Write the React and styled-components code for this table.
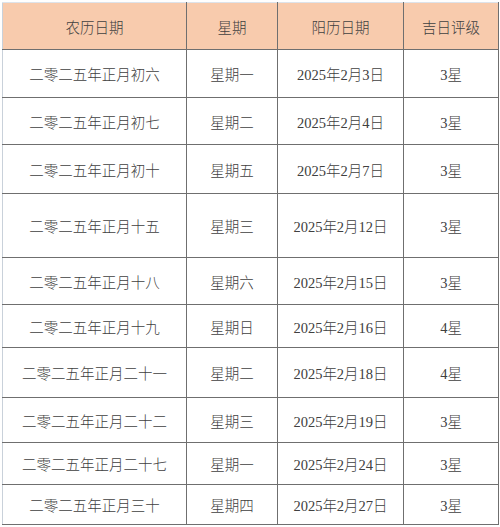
import React from 'react'
import styled, { createGlobalStyle } from 'styled-components'

const GlobalStyle = createGlobalStyle`
    html, body {
        margin: 0;
        padding: 0;
        background: #ffffff;
    }
`

const Page = styled.div`
    padding: 2px 0 0 2px;
    width: 500px;
    box-sizing: border-box;
`

const Table = styled.table`
    width: 496px;
    table-layout: fixed;
    border-collapse: collapse;
    font-family: "Liberation Serif", "Noto Sans CJK SC", serif;
    font-size: 14.5px;
    font-weight: 300;
    color: #404040;
`

const HeadCell = styled.th`
    font-weight: 300;
    background: #f8cbad;
    border: 1px solid #6f6f6f;
    border-top-color: #dde3ea;
    padding: 0;
    text-align: center;
    vertical-align: middle;
    &:first-child {
        border-left-color: #c9d1da;
    }
`

const Cell = styled.td`
    border: 1px solid #6f6f6f;
    padding: 0;
    text-align: center;
    vertical-align: middle;
    &:first-child {
        border-left-color: #c9d1da;
    }
`

const Row = styled.tr`
    height: ${props => props.h}px;
`

const rows = [
    ['二零二五年正月初六', '星期一', '2025年2月3日', '3星', 48],
    ['二零二五年正月初七', '星期二', '2025年2月4日', '3星', 47],
    ['二零二五年正月初十', '星期五', '2025年2月7日', '3星', 49],
    ['二零二五年正月十五', '星期三', '2025年2月12日', '3星', 64],
    ['二零二五年正月十八', '星期六', '2025年2月15日', '3星', 47],
    ['二零二五年正月十九', '星期日', '2025年2月16日', '4星', 43],
    ['二零二五年正月二十一', '星期二', '2025年2月18日', '4星', 50],
    ['二零二五年正月二十二', '星期三', '2025年2月19日', '3星', 45],
    ['二零二五年正月二十七', '星期一', '2025年2月24日', '3星', 42],
    ['二零二五年正月三十', '星期四', '2025年2月27日', '3星', 40],
]

export default function App() {
    return (
        <Page>
            <GlobalStyle />
            <Table>
                <colgroup>
                    <col style={{ width: 184 }} />
                    <col style={{ width: 91 }} />
                    <col style={{ width: 126 }} />
                    <col style={{ width: 95 }} />
                </colgroup>
                <thead>
                    <Row h={47}>
                        <HeadCell>农历日期</HeadCell>
                        <HeadCell>星期</HeadCell>
                        <HeadCell>阳历日期</HeadCell>
                        <HeadCell>吉日评级</HeadCell>
                    </Row>
                </thead>
                <tbody>
                    {rows.map(([lunar, week, solar, rate, h]) => (
                        <Row key={lunar} h={h}>
                            <Cell>{lunar}</Cell>
                            <Cell>{week}</Cell>
                            <Cell>{solar}</Cell>
                            <Cell>{rate}</Cell>
                        </Row>
                    ))}
                </tbody>
            </Table>
        </Page>
    )
}
